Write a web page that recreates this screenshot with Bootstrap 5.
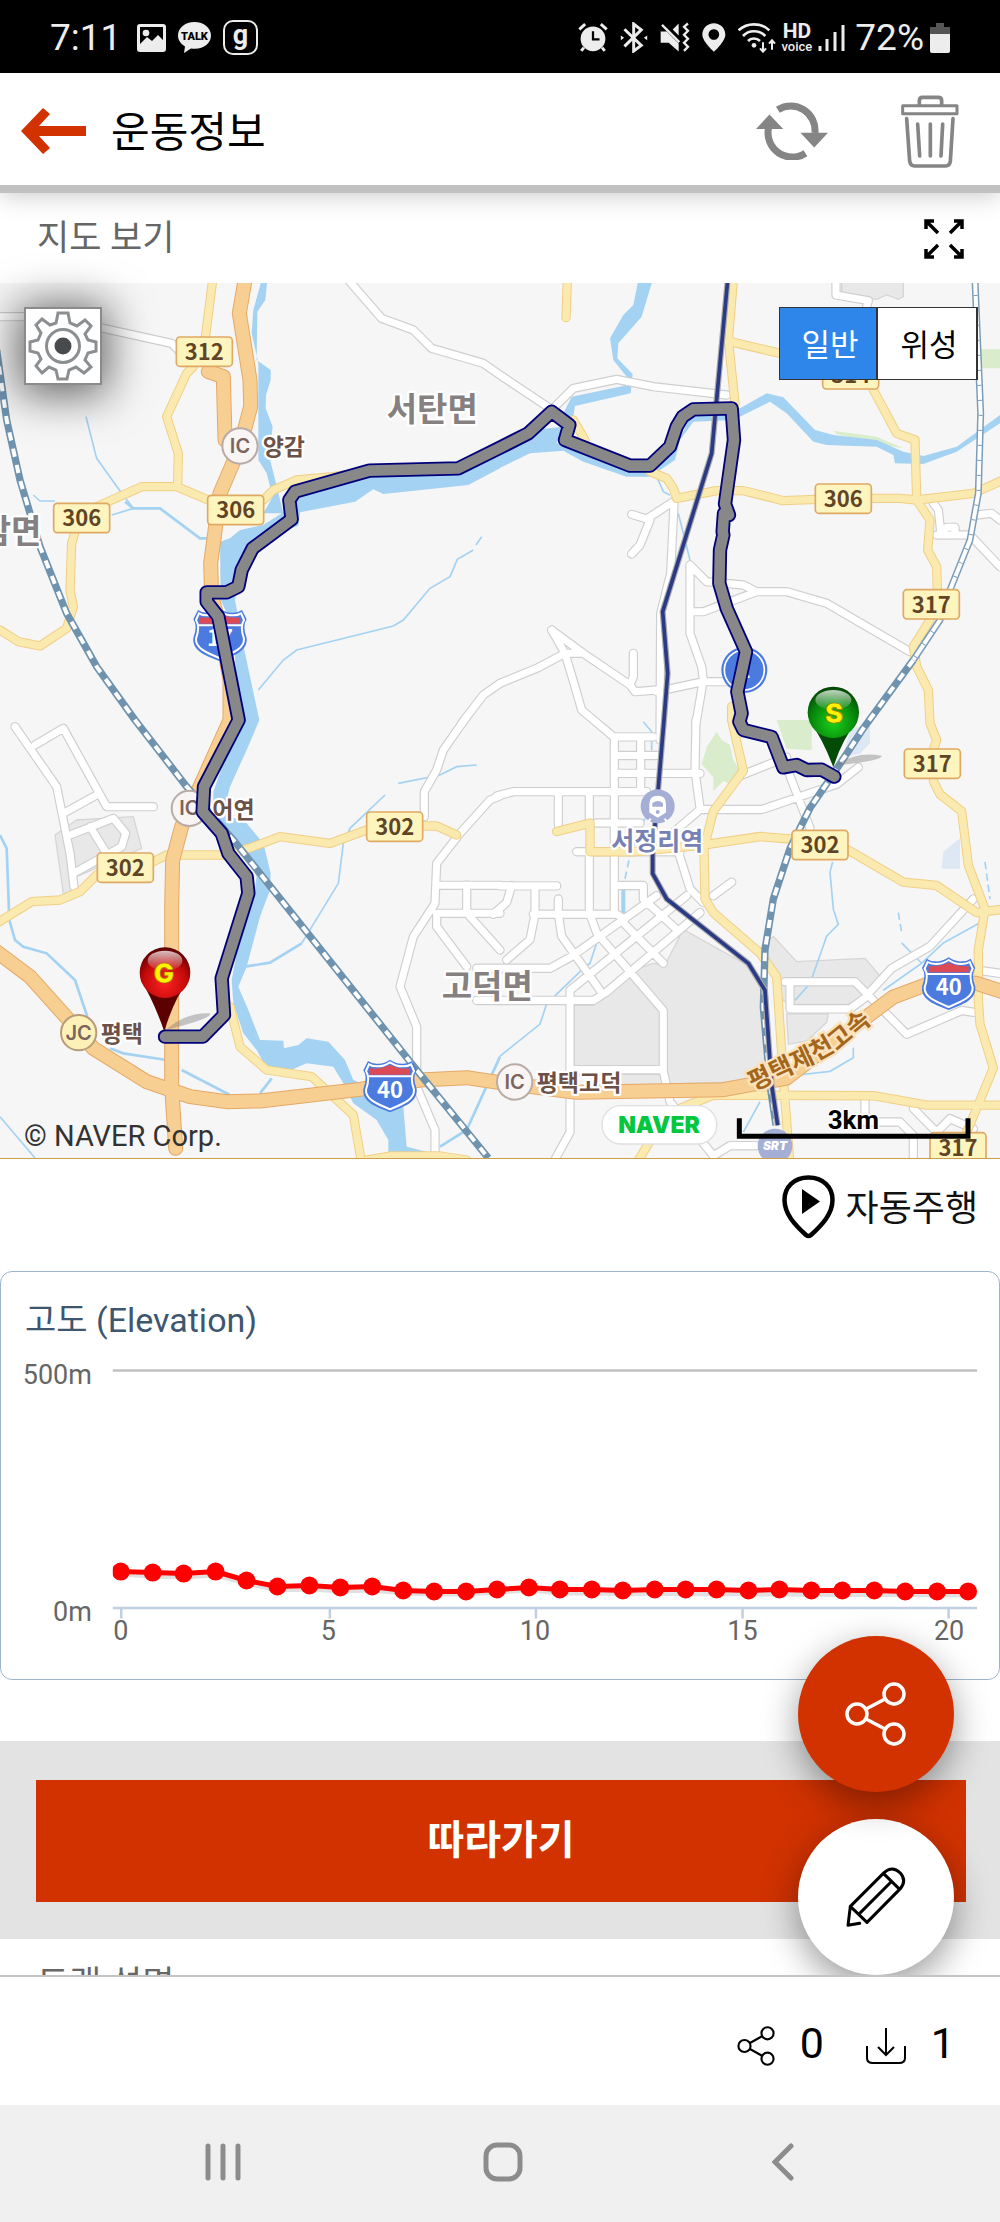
<!DOCTYPE html>
<html lang="ko">
<head>
<meta charset="utf-8">
<meta name="viewport" content="width=device-width, initial-scale=1">
<title>운동정보</title>
<link href="https://cdn.jsdelivr.net/npm/bootstrap@5.3.0/dist/css/bootstrap.min.css" rel="stylesheet">
<style>
:root{--accent:#d13200;--ko:Roboto,"Noto Sans CJK KR",sans-serif}
body{font-family:var(--ko);color:#000;background:#fff}
svg{display:block;flex:none}
.btn-plain{border:0;background:none;padding:0;color:inherit}
.status-bar{background:#000;color:#ededed;height:73px;padding:2px 50px 0 50px;font-size:37px;line-height:40px}
.status-gap{gap:12px}
.status-tight{gap:6px}
.hd-mark{font-size:21px;line-height:18px;font-weight:700;text-align:center}
.hd-mark span{display:block;font-size:13px;line-height:14px;font-weight:500}
.app-header{height:120px;padding:4px 40px 0 20px;border-bottom:8px solid #c1c1c1;box-shadow:0 2px 24px rgba(0,0,0,.22);z-index:3}
.app-title{font-size:42px;line-height:48px;font-weight:400;padding-top:4px}
.section-row{height:90px;padding:2px 36px 0 37px}
.section-title{font-size:35px;line-height:40px;font-weight:400;color:#666}
.map-box{border-bottom:1px solid #c9a04a;background:#f6f6f6}
.map-box>svg{width:100%;height:auto}
.map-tools{top:24px;left:24px;right:22px}
.btn-gear{width:78px;height:78px;border:2px solid #8d8a8c;background:#fff;padding:2px;box-shadow:0 4px 44px 6px rgba(0,0,0,.6)}
.map-type{border:1px solid #333;border-right-width:2px;height:73px}
.map-type .btn{width:98px;border:0;border-radius:0;font-size:31px;line-height:36px;background:#fff;color:#000;padding:4px 0 0 4px}
.map-type .btn.active{background:#2f86ea;color:#fff;border-right:2px solid #333}
.drive-row{height:112px;padding:0 22px 16px}
.drive-row .btn-plain{font-size:36px;line-height:40px;gap:11px;color:#111}
.drive-row span{padding-top:4px}
.chart-card{border:1px solid #9fb5cf;border-radius:12px}
.chart-title{font-size:34px;line-height:40px;color:#3e576f;font-weight:400;padding:28px 24px 0}
.chart-card svg{width:100%;height:auto}
.follow-panel{background:#e3e3e3;margin-top:61px;padding:39px 34px 37px 36px}
.btn-follow{background:var(--accent);color:#fff;height:122px;border-radius:0;font-size:40px;line-height:44px;font-weight:700;border:0}
.fab-stack{right:46px;bottom:0;gap:27px;z-index:2}
.fab{width:156px;height:156px;border-radius:50%;border:0;background:#fff;box-shadow:0 12px 36px rgba(0,0,0,.4)}
.fab-main{background:var(--accent);position:relative;z-index:1}
.count-bar{height:130px;border-top:2px solid #c4c4c4;padding:4px 45px 0 0;font-size:43px;line-height:48px;z-index:3;background:#fff}
.count-bar svg{margin-top:6px}
.count-item{gap:25px}
.count-item+.count-item{margin-left:42px}
.sys-nav{height:117px;background:#f0f0f0;gap:220px;padding:0 0 4px 6px}
.sys-nav .btn-plain{width:60px;height:60px}
.kr{font-family:"Noto Sans CJK KR",sans-serif;font-weight:700}
.halo{paint-order:stroke;stroke:#fff;stroke-width:14;stroke-linejoin:round}
</style>
<script src="https://cdn.jsdelivr.net/npm/bootstrap@5.3.0/dist/js/bootstrap.bundle.min.js"></script>
</head>
<body class="d-flex flex-column vh-100 overflow-hidden">

<div class="status-bar d-flex justify-content-between align-items-center flex-shrink-0">
  <div class="d-flex align-items-center status-gap">
    <span class="me-1">7:11</span>
    <svg width="29" height="28" viewBox="0 0 29 28"><rect width="29" height="28" rx="3" fill="#ededed"/><path d="M3 3H26V16L21 11L15 17L10 13L3 20Z" fill="#000"/><circle cx="9" cy="9" r="3.300" fill="#ededed"/></svg>
    <svg width="33" height="32" viewBox="0 0 33 32"><path d="M16.500 0C7 0 0 6 0 13.500C0 18 2.500 21.500 7 24.500L6 31L13 26.500C24 28.500 33 22 33 13.500C33 6 26 0 16.500 0Z" fill="#ededed"/><text x="16.500" y="18" font-size="11" font-weight="900" text-anchor="middle" font-family="Roboto,sans-serif">TALK</text></svg>
    <svg width="35" height="36" viewBox="0 0 35 36"><rect x="1" y="1" width="33" height="33" rx="9" fill="none" stroke="#ededed" stroke-width="2"/><text x="17.500" y="24" font-size="27" font-weight="700" fill="#ededed" text-anchor="middle" font-family="Roboto,sans-serif">g</text></svg>
  </div>
  <div class="d-flex align-items-center status-gap">
    <svg width="30" height="31" viewBox="215 62 92 94"><circle cx="261" cy="113" r="38" fill="#ededed"/><path d="M219 84L237 68M303 84L285 68M233 140L225 150M289 140L297 150" stroke="#ededed" stroke-width="9"/><path d="M261 90V115H281" fill="none" stroke="#000" stroke-width="7"/></svg>
    <svg width="28" height="31" viewBox="349 62 84 94"><path d="M362 84L413 133L390 150V68L413 86L362 136" fill="none" stroke="#ededed" stroke-width="9"/><path d="M351 103L361 110L351 117ZM431 103L421 110L431 117Z" fill="#ededed"/></svg>
    <svg width="30" height="31" viewBox="472 64 90 92"><path d="M474 92H492L528 128V152L498 126H474ZM528 68V104L510 86Z" fill="#ededed"/><path d="M478 72L530 124" stroke="#ededed" stroke-width="7"/><path d="M556 68L544 78L556 90L544 102L556 114L544 126L556 138L544 150" fill="none" stroke="#ededed" stroke-width="7"/></svg>
    <svg width="24" height="31" viewBox="602 64 72 90"><path fill-rule="evenodd" d="M638 66C618 66 603 81 603 101C603 121 638 152 638 152S672 121 672 101C672 81 657 66 638 66ZM638 84A16 16 0 1 1 637 84Z" fill="#ededed"/></svg>
    <div class="d-flex align-items-center status-tight">
      <svg width="38" height="30" viewBox="714 64 114 90"><path d="M716 86C740 62 784 62 808 86M729 103C746 84 778 84 796 103M744 118C753 108 770 108 780 118" fill="none" stroke="#ededed" stroke-width="8"/><circle cx="762" cy="131" r="7" fill="#ededed"/><path d="M789 122V150M780 140L789 150L798 140M816 144V117M807 126L816 116L825 126" fill="none" stroke="#ededed" stroke-width="6"/></svg>
      <div class="hd-mark">HD<span>voice</span></div>
      <svg width="27" height="28" viewBox="0 0 27 28"><path d="M2 22V27M9 15V27M17 8V27M25 1V27" stroke="#ededed" stroke-width="3"/></svg>
      <span class="ms-1">72%</span>
      <svg width="20" height="30" viewBox="0 0 20 30"><path d="M6 0H14V4H20V12H0V4H6Z" fill="#555"/><path d="M0 11H20V28A2 2 0 0 1 18 30H2A2 2 0 0 1 0 28Z" fill="#ededed"/></svg>
    </div>
  </div>
</div>

<header class="app-header d-flex align-items-center flex-shrink-0 bg-white position-relative">
  <button class="btn-plain me-4" type="button" aria-label="뒤로"><svg width="67" height="48" viewBox="0 0 67 48"><path d="M1 24L23 1L30 7L19 19H66V29H19L30 41L23 47Z" fill="#d13200"/></svg></button>
  <h1 class="app-title m-0 me-auto">운동정보</h1>
  <div class="d-flex align-items-center gap-5">
    <button class="btn-plain me-4" type="button" aria-label="새로고침"><svg width="72" height="58" viewBox="776 308 214 172"><path d="M841 331A72 72 0 0 1 951 400M923 460A72 72 0 0 1 813 386" fill="none" stroke="#858585" stroke-width="21"/><path d="M776 388L816 345L857 388ZM908 399H990L949 443Z" fill="#858585"/></svg></button>
    <button class="btn-plain" type="button" aria-label="삭제"><svg width="60" height="73" viewBox="1202 283 178 219"><g fill="none" stroke="#858585" stroke-width="9" stroke-linecap="round" stroke-linejoin="round"><rect x="1209" y="315" width="163" height="24"/><path d="M1259 311V300Q1259 290 1269 290H1316Q1326 290 1326 300V311M1221 354L1230 482Q1232 496 1245 496H1338Q1350 496 1352 482L1360 354M1254 370L1260 466M1292 370V466M1329 370L1324 466" stroke-width="11"/></g></svg></button>
  </div>
</header>

<div class="position-relative flex-fill overflow-hidden">
<main>
  <div class="section-row d-flex align-items-center justify-content-between">
    <h2 class="section-title m-0">지도 보기</h2>
    <button class="btn-plain" type="button" aria-label="전체 화면"><svg width="40" height="40" viewBox="0 0 40 40"><path d="M14 14L2 2M2 10V2H10M26 14L38 2M30 2H38V10M14 26L2 38M2 30V38H10M26 26L38 38M30 38H38V30" fill="none" stroke="#000" stroke-width="3.500"/></svg></button>
  </div>

  <div class="map-box position-relative">
    <svg viewBox="0 9 3000 2625" role="img" aria-label="트랙 지도">
      <defs>
        <g id="roadWhite" fill="none" stroke-linecap="round" stroke-linejoin="round">
          <path d="M0 110H75L310 145 515 190 540 215M1045 0L1145 115 1240 150 1295 205 1450 250 1500 285 1650 385M1385 1330L1450 1245 1500 1210"/>
          <path transform="translate(1500 0)" d="M160 385L220 325 350 298 460 320 680 345M1008 0V45L1105 62 1095 100M395 703L440 717 515 668M395 822L420 795 450 720M522 670L512 880 482 1000 480 1380M570 855L620 905 730 915 770 935M570 855V1060L605 1160 610 1200 588 1330M575 995H610L770 935 860 935 980 970 1230 1115M470 1235L610 1205 700 1205M1300 670L1315 690 1322 755 1340 742H1365V765H1310M1375 765H1410L1500 860M1430 705L1475 700 1500 720M0 1210L110 1165 195 1120 225 1220 245 1290 340 1370M155 1050L250 1120 390 1215 405 1235 470 1230M155 1050L195 1120H250M400 1120V1190L390 1215"/>
          <path transform="translate(0 1320)" d="M45 20L170 200 210 400 222 500M105 75L190 25 320 260H460M190 280L290 225M210 345L340 295 377 340 365 380 220 460M270 320L320 400M1400 -10L1330 90 1310 150 1273 215V290M1500 228L1470 240 1380 340 1310 430 1305 550 1240 650 1200 800 1250 920V1100L1305 1230V1310M1310 496H1500M1310 580H1500M1400 495V580M1310 580V620L1400 740M1410 590L1500 690"/>
          <path transform="translate(1500 1320) scale(1 1.0135)" d="M588 0L585 150 600 260M343 50V570M460 50H343M422 55V200M343 105H470M343 158H600M-10 225L40 212H440M175 212V310M268 212V300M290 305H420M600 265H785L1010 190 1075 140M600 265L500 350M720 165L860 110M860 140L930 320M230 390H540M268 390V575M535 390L570 500 610 540M640 520L695 480M0 491H170M100 575H350L375 590M35 490L20 540 -20 575M105 495V575L90 650 20 710M175 530V575L185 640 300 800M270 575L290 630 490 860V1040L510 1130 640 1290 690 1260 770 1260M-70 735H150L215 700 470 520M-70 830H280L320 805 600 570M210 1220V800L560 520M350 490H430V530L530 620M370 600L490 720M215 1035H490M855 775H1065L1105 815 1050 855H870V780M1105 810L1175 735 1290 670 1420 530M1105 815L1220 930 1385 860 1420 865M1430 740L1500 750M210 1080V1220L160 1310M1095 1120V1190H1200L1240 1230V1310M1240 1150L1310 1220 1350 1180 1420 1210"/>
        </g>
        <g id="roadYellow" fill="none" stroke-linecap="round" stroke-linejoin="round">
          <path d="M638 0L615 180M580 260L560 280 500 410 535 520 533 610M290 680L425 620 530 620 625 660M790 660L820 630 890 600 1000 590 1105 575M230 740L215 790 210 930 220 980 200 1045 120 1098 55 1085 0 1050"/>
          <path transform="translate(1500 0)" d="M202 0L198 113M700 0L685 180 705 370M690 185L840 220M1115 320L1190 460 1245 480 1250 655M450 575L500 595 520 625 530 655 650 632 730 632 850 662 950 658M1110 655H1200L1250 660 1420 640 1510 600M1250 660L1290 720 1283 810 1310 860 1312 930M1290 1020L1240 1100 1250 1160 1285 1230 1290 1330 1310 1380 1300 1410M220 420L255 480"/>
          <path transform="translate(0 1320)" d="M-10 610L95 545 180 540 240 515 290 465M460 425L500 405H680L760 380 840 350 990 370 1100 330M1270 318H1310L1370 345M690 860L720 980 800 1050 935 1070 1060 1185 1085 1330M1100 1320L1170 1308H1320L1400 1320"/>
          <path transform="translate(1500 1320) scale(1 1.0135)" d="M695 -40V0L730 150 640 270 612 380 615 530 640 570 780 690 830 760 850 1060 870 1320M170 330L270 305V390H400L610 370 780 345 870 352M1045 385L1210 480 1310 490 1430 570 1510 560M1300 180L1320 220 1385 270 1405 430 1455 560 1435 680V830L1440 900 1480 1030 1430 1150 1400 1220M405 1320L460 1230 540 1150 640 1110 1120 1112 1280 1140H1510"/>
        </g>
        <g id="roadOrange" fill="none" stroke-linecap="round" stroke-linejoin="round">
          <path d="M735 0L718 100 750 300 752 380 720 500 660 640 632 850 635 950 665 1060 690 1200 690 1320 600 1520 545 1640 518 1740 515 1880V2420L527 2605M625 275L670 290 675 480"/>
          <path d="M-10 2015L90 2090 220 2235 280 2305 440 2405 570 2450 680 2465 780 2463 1080 2428 1260 2400 1400 2393 1500 2408 1730 2437 2170 2429 2360 2394 2530 2263 2680 2151 2790 2110 2930 2110 3010 2136"/>
        </g>
        <path id="track" d="M2503 1490L2465 1469 2420 1470 2390 1455 2350 1462 2315 1371 2230 1350 2218 1325 2225 1300 2212 1235 2238 1115 2180 985 2158 910 2160 810 2170 765 2168 755 2172 700 2187 705 2175 672 2202 480 2195 385 2080 388 2048 410 2030 440 2010 500 1950 557 1890 557 1695 480 1708 435 1655 395 1585 460 1500 503 1375 565 1108 572 885 635 868 660 875 718 758 805 725 870 715 920 680 937 620 937V965L655 1010 716 1320 612 1520 608 1595 665 1660 685 1720 740 1790 745 1840 665 2095 672 2205 608 2270 495 2270" fill="none" stroke-linecap="round" stroke-linejoin="round"/>
        <g id="roadSign"><rect x="-84" y="-44" width="168" height="88" rx="11" fill="#fdf4be" stroke="#dfa963" stroke-width="5"/></g>
        <g id="shield"><path d="M0 -78Q-20 -64 -40 -66Q-55 -66 -66 -74L-80 -46Q-66 -26 -80 10C-84 50 -40 64 0 80C40 64 84 50 80 10Q66 -26 80 -46L66 -74Q55 -66 40 -66Q20 -64 0 -78Z" fill="#4c7be0"/><path d="M0 -70Q-20 -57 -40 -58Q-54 -58 -63 -64L-72 -44Q-59 -24 -72 12C-74 42 -36 56 0 71C36 56 74 42 72 12Q59 -24 72 -44L63 -64Q54 -58 40 -58Q20 -57 0 -70Z" fill="none" stroke="#fff" stroke-width="6"/><path d="M-66 -28H66" stroke="#fff" stroke-width="6"/><path d="M-60 -33V-52Q-30 -48 0 -62Q30 -48 60 -52V-33Z" fill="#dc4a55"/></g>
        <path id="expressway" d="M2260 2433L2440 2349 2530 2298 2640 2207"/>
        <radialGradient id="ballRed" cx=".5" cy=".7" r=".7"><stop offset="0" stop-color="#f22"/><stop offset=".6" stop-color="#c40a0a"/><stop offset="1" stop-color="#500"/></radialGradient>
        <radialGradient id="ballGreen" cx=".5" cy=".7" r=".7"><stop offset="0" stop-color="#1bd01b"/><stop offset=".6" stop-color="#078a0c"/><stop offset="1" stop-color="#034303"/></radialGradient>
        <linearGradient id="shine" x1="0" y1="0" x2="0" y2="1"><stop offset="0" stop-color="#fff" stop-opacity=".75"/><stop offset="1" stop-color="#fff" stop-opacity=".05"/></linearGradient>
      </defs>

      <rect y="9" width="3000" height="2625" fill="#f6f6f6"/>

      <!-- built-up areas -->
      <g fill="#e8e8e8" stroke="#d6d6d6" stroke-width="4">
        <path d="M2525 0H2710V50L2695 58 2660 45 2630 58 2525 40Z"/>
        <path d="M165 1665L230 1620 400 1610 425 1705 230 1790 215 1840H190Z"/>
        <path d="M1722 2359V2176H1780L1885 2080 1980 2197V2359ZM1722 2382H1990V2424H1870ZM1885 2075L1960 2050 1995 2055 2050 1948 2250 2060 2290 2131 2305 2404 2000 2412 1990 2192Z"/>
        <path d="M2285 1999L2320 1969 2390 2045 2595 2035 2650 2100 2580 2171 2380 2181 2350 2161ZM2360 2202H2485L2480 2227 2420 2283 2365 2293Z"/>
      </g>
      <g fill="#d9eccb">
        <path d="M2940 208H3000V265H2945ZM2500 452L2630 470 2710 505 2630 492 2510 462Z"/>
        <path d="M2150 1355L2165 1380 2190 1395 2200 1440 2220 1472 2190 1513 2170 1503 2140 1533 2140 1492 2105 1452 2120 1401ZM2330 1320H2435V1411L2360 1406Z"/>
      </g>
      <path d="M2550 1350L2610 1330V1390L2580 1421 2530 1431ZM2830 1715L2880 1675V1766H2825Z" fill="#dde8f4"/>

      <!-- rivers and streams -->
      <g fill="#a4d2f2">
        <path d="M785 0H802L796 60 772 95 770 240 812 270V300L798 345 797 385 818 440 808 530 838 650 850 700H790L818 650 800 580 775 540V250L755 160 760 90Z"/>
        <path d="M1500 500L1370 565 1105 585 885 640 860 690 790 735 720 750 690 775 660 785 662 960 700 1040 715 1320 640 1535V1610L690 1650 740 1720 770 1790 760 1860 710 2020 695 2100 700 2170 730 2260 770 2310 800 2365 850 2380 920 2350 1000 2360 1030 2410 1060 2470 1130 2520 1165 2580V2634H1240L1280 2615 1220 2600 1210 2480 1105 2420 1060 2400 1035 2340 985 2285 920 2275 895 2295 852 2305 850 2282 780 2280 745 2190 715 2120 740 2060 780 1910 810 1830 812 1780 790 1690 740 1630 670 1600 690 1520 740 1410 778 1320 735 1120 705 960 720 870 760 780 895 737 900 697 1065 665 1120 628 1150 642 1405 615 1500 565Z"/>
        <path transform="translate(1500 0)" d="M415 0H458L425 110 355 190 352 235 398 282 392 340 225 378 215 440 190 400 215 350 370 318 380 290 340 240 330 175 370 105 400 75Z"/>
        <path transform="translate(1500 0)" d="M-2 500L90 450 190 440 170 490 380 560 450 560 520 520 575 400 650 385 720 385 800 340 850 352 945 450 1000 465 1130 480 1210 515 1270 528 1370 500 1500 405V430L1370 515 1270 552 1185 550 1180 525 1130 500 980 495 940 485 860 400 810 365 700 420 580 425 540 480 525 540 450 590 380 590 250 545 190 512 90 520 -2 565Z"/>
      </g>
      <g fill="none" stroke="#a4d2f2" stroke-width="5">
        <path d="M258 410L290 535 365 640 400 685M100 645L120 663H165M335 705L400 685M775 1230L850 1140 890 1110 1180 1038 1210 1020 1290 925 1350 890 1372 838 1420 810M1428 795L1445 770"/>
        <path d="M375 665L400 685H480L600 775H665M0 1665L20 1705 28 1920 45 1980 70 2000 140 2020 225 2100 262 2210M330 2305L370 2320 500 2340M545 2370L690 2445M780 2440L815 2395M735 2060L810 2048 905 1990M1500 2330L1400 2550 1320 2600" stroke-width="8"/>
        <path d="M905 1990L1015 1810 1030 1690 1050 1645 1155 1545M1195 1510L1320 1485 1370 1460 1430 1455M0 2510L105 2634"/>
        <path transform="translate(1500 0)" d="M470 590L490 635 510 645M535 700L570 840"/>
        <path transform="translate(1500 1320) scale(1 1.0135)" d="M0 995L120 900 140 840 240 745 270 720 290 660 365 595M998 420L990 450 1000 560 1015 605 980 640 930 780 885 830M1440 600L1330 660 1265 720 1150 800M1205 660L1265 720M780 1130L730 1220M1060 970V1000L990 1040 900 1050M430 5L455 35V90"/>
        <path transform="translate(1500 1320) scale(1 1.0135)" d="M370 575V490" stroke-width="12"/>
        <path transform="translate(1500 1320) scale(1 1.0135)" d="M375 470L390 400 435 290M1195 570L1205 630M1455 420L1470 530" stroke-dasharray="22 12"/>
      </g>

      <!-- roads -->
      <use href="#roadWhite" stroke="#cfcfcf" stroke-width="28"/>
      <use href="#roadWhite" stroke="#fff" stroke-width="21"/>
      <use href="#roadYellow" stroke="#f0cf85" stroke-width="28"/>
      <use href="#roadYellow" stroke="#fbeab0" stroke-width="22"/>
      <use href="#roadOrange" stroke="#e5a866" stroke-width="45"/>
      <use href="#roadOrange" stroke="#f8cf92" stroke-width="39"/>

      <!-- railways -->
      <g fill="none" stroke-linejoin="round">
        <path d="M2925 0L2942 400 2935 640 2910 780 2850 930 2820 1020 2740 1140" stroke="#7b9db8" stroke-width="21"/>
        <path d="M2925 0L2942 400 2935 640 2910 780 2850 930 2820 1020 2740 1140" stroke="#fff" stroke-width="12"/>
        <path d="M2925 0L2942 400 2935 640 2910 780 2850 930 2820 1020 2740 1140" stroke="#7b9db8" stroke-width="12" stroke-dasharray="3 42"/>
        <g stroke="#6f93ae" stroke-width="22">
          <path d="M-10 210L20 420 60 600 120 800 200 1000 290 1160 405 1320 560 1520 700 1680 1250 2370 1465 2634"/>
          <path d="M2740 1140L2590 1345 2500 1482 2430 1584 2370 1705 2320 1857 2295 2009 2290 2182 2310 2415 2328 2536"/>
        </g>
        <g stroke="#fff" stroke-width="12" stroke-dasharray="25 25">
          <path d="M-10 210L20 420 60 600 120 800 200 1000 290 1160 405 1320 560 1520 700 1680 1250 2370 1465 2634"/>
          <path d="M2740 1140L2590 1345 2500 1482 2430 1584 2370 1705 2320 1857 2295 2009 2290 2182 2310 2415 2328 2536"/>
        </g>
        <path d="M2183 0L2135 520 1988 995 2003 1180 1992 1320 1975 1522 1958 1715V1781L2000 1857 2245 2050 2295 2131 2315 2415 2333 2536" stroke="#a9a9ae" stroke-width="18"/>
        <path d="M2183 0L2135 520 1988 995 2003 1180 1992 1320 1975 1522 1958 1715V1781L2000 1857 2245 2050 2295 2131 2315 2415 2333 2536" stroke="#2a3a84" stroke-width="11"/>
      </g>

      <!-- road numbers -->
      <use href="#roadSign" x="613" y="215"/><use href="#roadSign" x="245" y="714"/><use href="#roadSign" x="707" y="690"/>
      <use href="#roadSign" x="2530" y="656"/><use href="#roadSign" x="2794" y="973"/><use href="#roadSign" x="2552" y="283"/>
      <use href="#roadSign" x="2797" y="1451"/><use href="#roadSign" x="2460" y="1695"/><use href="#roadSign" x="376" y="1763"/>
      <use href="#roadSign" x="1184" y="1640"/><use href="#roadSign" x="2874" y="2602"/>
      <g class="kr" font-size="66" fill="#5f4526" text-anchor="middle">
        <text x="613" y="240">312</text><text x="245" y="739">306</text><text x="707" y="715">306</text>
        <text x="2530" y="681">306</text><text x="2794" y="998">317</text><text x="2552" y="308">314</text>
        <text x="2797" y="1476">317</text><text x="2460" y="1720">302</text><text x="376" y="1788">302</text>
        <text x="1184" y="1665">302</text><text x="2874" y="2627">317</text>
      </g>
      <use href="#shield" x="660" y="1064"/><use href="#shield" x="1170" y="2417"/><use href="#shield" x="2846" y="2110"/>
      <g class="kr" font-size="66" fill="#fff" text-anchor="middle"><text x="660" y="1098">17</text><text x="1170" y="2453">40</text><text x="2846" y="2146">40</text></g>
      <circle cx="2233" cy="1170" r="69" fill="#4c7be0"/><circle cx="2233" cy="1170" r="60" fill="none" stroke="#fff" stroke-width="5"/>
      <text class="kr" x="2233" y="1194" font-size="66" fill="#fff" text-anchor="middle">1</text>

      <!-- interchanges -->
      <g fill="#f8f5f4" stroke="#b9aba6" stroke-width="6"><circle cx="720" cy="498" r="53"/><circle cx="568" cy="1585" r="53"/><circle cx="1544" cy="2406" r="53"/><circle cx="236" cy="2258" r="53" fill="#fdf1b8" stroke="#b89c7a"/></g>
      <g font-family="Inter,sans-serif" font-weight="600" font-size="60" fill="#7b655c" text-anchor="middle"><text x="720" y="519">IC</text><text x="568" y="1606">IC</text><text x="1544" y="2427">IC</text><text x="236" y="2279">JC</text></g>
      <g class="kr halo" font-size="69" fill="#6b5148"><text x="788" y="526">양감</text><text x="637" y="1613">어연</text><text x="302" y="2286">평택</text><text x="1610" y="2432">평택고덕</text></g>
      <g class="kr halo" font-size="99" fill="#868080"><text x="1160" y="424">서탄면</text><text x="-58" y="790">감면</text><text x="1325" y="2153">고덕면</text></g>
      <text class="kr" font-size="75" fill="#a4661c" style="paint-order:stroke;stroke:#fbe3bd;stroke-width:14"><textPath href="#expressway">평택제천고속</textPath></text>

      <!-- stations -->
      <circle cx="1973" cy="1579" r="51" fill="#a5afd6"/><path d="M1951 1596V1572Q1951 1550 1973 1550T1995 1572V1596L1973 1610ZM1952 1616L1946 1624M1994 1616L2000 1624" fill="#fff" stroke="#fff" stroke-width="6"/><path d="M1957 1580V1570Q1973 1556 1989 1570V1580Z" fill="#a5afd6"/><circle cx="1973" cy="1596" r="6" fill="#a5afd6"/>
      <text class="kr halo" x="1834" y="1709" font-size="75" fill="#7882b2">서정리역</text>
      <circle cx="2325" cy="2598" r="52" fill="#a5afd6"/><text x="2325" y="2609" font-family="Inter,sans-serif" font-weight="900" font-style="italic" font-size="36" fill="#fff" text-anchor="middle">SRT</text>

      <!-- start and goal pins -->
      <g fill="#777" opacity=".4"><path d="M497 2250Q560 2195 630 2200Q640 2215 497 2250ZM2503 1457Q2570 1412 2645 1427Q2650 1442 2503 1457Z"/></g>
      <path d="M422 2100Q460 2160 493 2255Q520 2160 566 2100Z" fill="#5c0000"/><circle cx="495" cy="2078" r="76" fill="url(#ballRed)"/><ellipse cx="495" cy="2042" rx="52" ry="30" fill="url(#shine)"/>
      <path d="M2430 1325Q2470 1380 2500 1462Q2525 1380 2570 1325Z" fill="#034b06"/><circle cx="2500" cy="1297" r="77" fill="url(#ballGreen)"/><ellipse cx="2500" cy="1260" rx="54" ry="30" fill="url(#shine)"/>
      <g font-family="Inter,sans-serif" font-weight="900" font-size="81" fill="#fff200" stroke="#a07000" stroke-width="2" text-anchor="middle"><text x="492" y="2110">G</text><text x="2502" y="1330">S</text></g>

      <!-- recorded track -->
      <use href="#track" stroke="#00007c" stroke-width="43"/>
      <use href="#track" stroke="#888" stroke-width="32"/>

      <!-- legend -->
      <rect x="1806" y="2477" width="344" height="115" rx="57" fill="#fff" stroke="#e0e0e0" stroke-width="4"/>
      <text x="1977" y="2559" font-family="Inter,sans-serif" font-weight="900" font-size="69" fill="#03c73c" text-anchor="middle">NAVER</text>
      <path d="M2218 2515V2569H2904V2515" fill="none" stroke="#000" stroke-width="15"/>
      <text class="halo" x="2560" y="2547" font-family="Roboto,sans-serif" font-weight="700" font-size="78" text-anchor="middle" style="stroke-width:8">3km</text>
      <text x="72" y="2599" font-family="Roboto,sans-serif" font-size="87" fill="#333">© NAVER Corp.</text>
    </svg>
    <div class="map-tools position-absolute d-flex justify-content-between align-items-start">
      <button class="btn-gear" type="button" aria-label="지도 설정"><svg width="70" height="70" viewBox="0 0 70 70"><path d="M30 2H40L42 12L49 15L57 9L63 15L57 23L60 29L68 31V40L60 42L57 49L63 56L56 62L48 56L41 59L39 68H30L28 59L21 56L14 62L8 55L13 48L10 42L2 40V31L10 29L13 22L8 14L14 8L22 14L28 12Z" fill="#fff" stroke="#8b8f91" stroke-width="3"/><circle cx="35" cy="35" r="16.500" fill="none" stroke="#8b8f91" stroke-width="3"/><circle cx="35" cy="35" r="8.500" fill="#474b4d"/></svg></button>
      <div class="map-type d-flex" role="group" aria-label="지도 종류">
        <button class="btn active" type="button">일반</button><button class="btn" type="button">위성</button>
      </div>
    </div>
  </div>

  <div class="drive-row d-flex justify-content-end align-items-center">
    <button class="btn-plain d-flex align-items-center" type="button"><svg width="53" height="64" viewBox="0 0 53 64"><path d="M26.500 2.500C12 2.500 2.500 12 2.500 25C2.500 39 13 50 24 60Q26.500 62 29 60C40 50 50.500 39 50.500 25C50.500 12 41 2.500 26.500 2.500Z" fill="none" stroke="#000" stroke-width="4.500"/><path d="M20 14V39L38 26.500Z"/></svg><span>자동주행</span></button>
  </div>

  <section class="chart-card">
    <h2 class="chart-title m-0">고도 (Elevation)</h2>
    <svg viewBox="0 1339 1000 340" role="img" aria-label="고도 그래프">
      <defs><clipPath id="plot"><rect x="112" y="1360" width="866" height="250"/></clipPath></defs>
      <path d="M112 1369.500H978" stroke="#c0c0c0" stroke-width="2.500"/>
      <path d="M112 1607.500H978M120.500 1608V1618M329.500 1608V1618M536 1608V1618M743 1608V1618M949.500 1608V1618" stroke="#c0d0e0" stroke-width="2.500"/>
      <g clip-path="url(#plot)">
        <path d="M120 1573L152 1575 183 1576 215 1574 246 1582 277 1589 309 1588 340 1590 372 1589 403 1592 434 1593 466 1593 497 1591 529 1589 560 1592 969 1594" fill="none" stroke="#000" stroke-opacity=".12" stroke-width="6"/>
        <polyline id="elevLine" fill="none" stroke="#f00" stroke-width="5" points="120,1571 152,1572 183,1573 215,1571 246,1580 277,1586 309,1585 340,1587 372,1586 403,1590 434,1591 466,1591 497,1589 529,1587 560,1589 592,1589 623,1590 655,1589 686,1589 717,1589 749,1590 780,1589 812,1590 843,1590 875,1590 906,1591 938,1591 969,1591"/>
        <g id="elevDots" fill="#f00"></g>
      </g>
      <g font-family="Roboto,sans-serif" font-size="27" fill="#666">
        <text x="91" y="1383" text-anchor="end">500m</text><text x="91" y="1621" text-anchor="end">0m</text>
        <g text-anchor="middle"><text x="120" y="1640">0</text><text x="328" y="1640">5</text><text x="535" y="1640">10</text><text x="743" y="1640">15</text><text x="950" y="1640">20</text></g>
      </g>
    </svg>
  </section>

  <div class="follow-panel"><button class="btn btn-follow w-100" type="button">따라가기</button></div>

  <div class="section-row d-flex align-items-center"><h2 class="section-title m-0">트랙 설명</h2></div>
</main>
<div class="fab-stack position-absolute d-flex flex-column">
  <button class="fab fab-main d-flex align-items-center justify-content-center" type="button" aria-label="공유"><svg width="62" height="66" viewBox="0 0 62 66"><g fill="none" stroke="#fff" stroke-width="3.500"><circle cx="12" cy="33" r="10"/><circle cx="49" cy="13" r="10"/><circle cx="49" cy="53" r="10"/><path d="M21 28L40 18M21 38L40 48"/></g></svg></button>
  <button class="fab d-flex align-items-center justify-content-center" type="button" aria-label="편집"><svg width="60" height="60" viewBox="1037 499 180 180"><g fill="none" stroke="#000" stroke-width="9" stroke-linejoin="round" stroke-linecap="round"><path d="M1078 668L1043 674L1050 617L1152 515Q1176 494 1200 517Q1220 540 1200 564L1100 665L1050 617M1150 519L1198 566M1172 544L1078 638"/></g></svg></button>
</div>
</div>

<footer class="count-bar d-flex justify-content-end align-items-center flex-shrink-0 position-relative">
  <div class="count-item d-flex align-items-center"><svg width="38" height="40" viewBox="0 0 62 66"><g fill="none" stroke="#000" stroke-width="3.500"><circle cx="12" cy="33" r="10"/><circle cx="50" cy="12" r="10"/><circle cx="50" cy="54" r="10"/><path d="M21 28L41 17M21 38L41 49"/></g></svg><span>0</span></div>
  <div class="count-item d-flex align-items-center"><svg width="40" height="38" viewBox="0 0 40 38"><path d="M1 19V31Q1 36 7 36H33Q39 36 39 31V19M20 1V27M12 20L20 28L28 20" fill="none" stroke="#000" stroke-width="2"/></svg><span>1</span></div>
</footer>

<nav class="sys-nav d-flex justify-content-center align-items-center flex-shrink-0">
  <button class="btn-plain d-flex align-items-center justify-content-center" type="button" aria-label="최근 앱"><svg width="36" height="38" viewBox="0 0 36 38"><path d="M3 3V35M18 3V35M33 3V35" stroke="#8c8c8c" stroke-width="5" stroke-linecap="round"/></svg></button>
  <button class="btn-plain d-flex align-items-center justify-content-center" type="button" aria-label="홈"><svg width="40" height="40" viewBox="0 0 40 40"><rect x="3" y="3" width="34" height="34" rx="11" fill="none" stroke="#8c8c8c" stroke-width="5"/></svg></button>
  <button class="btn-plain d-flex align-items-center justify-content-center" type="button" aria-label="뒤로 가기"><svg width="22" height="38" viewBox="0 0 22 38"><path d="M19 3L3 19L19 35" fill="none" stroke="#8c8c8c" stroke-width="5" stroke-linecap="round"/></svg></button>
</nav>

<script>
  // one marker for each sample of the elevation line
  const dots = document.getElementById('elevDots');
  for (const p of document.getElementById('elevLine').points) {
    const c = document.createElementNS('http://www.w3.org/2000/svg', 'circle');
    c.setAttribute('cx', p.x); c.setAttribute('cy', p.y); c.setAttribute('r', 9);
    dots.appendChild(c);
  }
</script>
</body>
</html>
